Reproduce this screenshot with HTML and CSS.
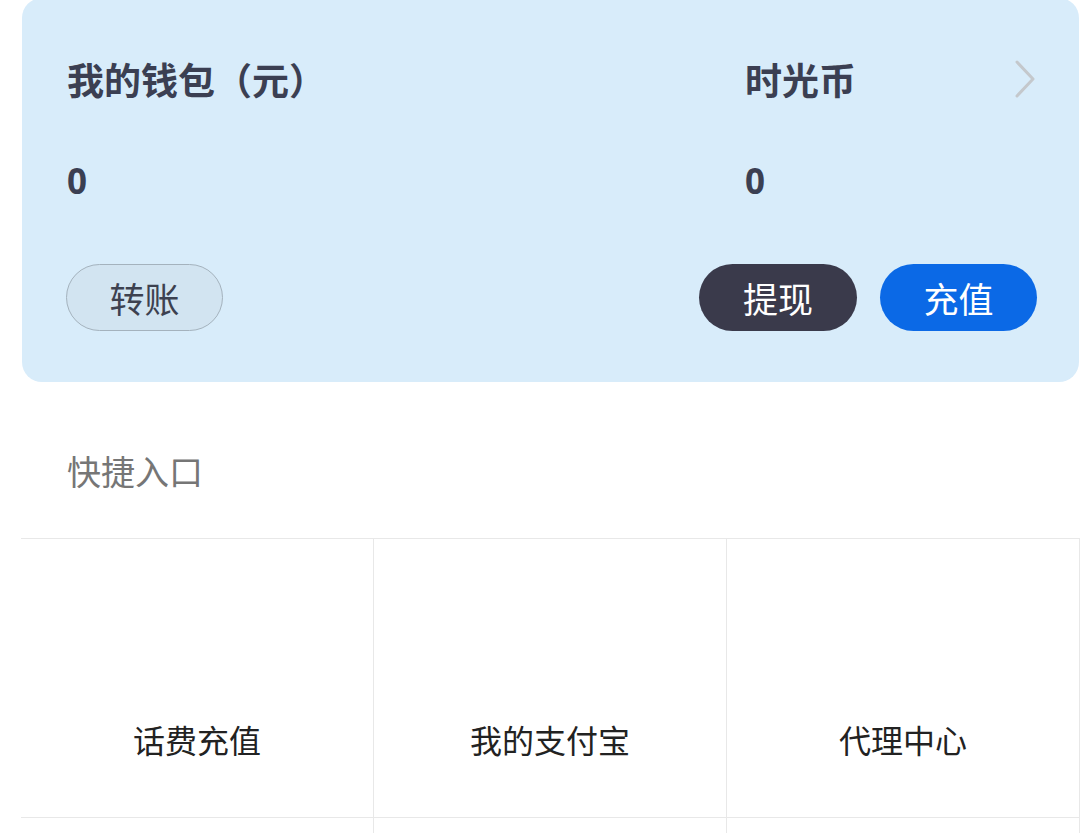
FILE: index.html
```html
<!DOCTYPE html>
<html lang="zh-CN">
<head>
    <meta charset="UTF-8">
    <meta name="viewport" content="width=device-width, initial-scale=1.0">
    <title>我的钱包</title>
    <link rel="stylesheet" href="styles.css">
</head>
<body>
    <main>
        <section class="wallet-card">
            <div class="wallet-row">
                <h2 class="wallet-title">我的钱包（元）</h2>
                <div class="coin-head">
                    <h2 class="wallet-title">时光币</h2>
                    <svg class="chevron" width="22" height="40" viewBox="0 0 22 40">
                        <path d="M3 3 L19 20 L3 37" fill="none" stroke="#c4c8cc" stroke-width="3" stroke-linecap="round" stroke-linejoin="round"/>
                    </svg>
                </div>
            </div>
            <div class="wallet-row values">
                <div class="amount">0</div>
                <div class="amount">0</div>
            </div>
            <div class="wallet-actions">
                <button class="pill pill-ghost">转账</button>
                <div class="action-group">
                    <button class="pill pill-dark">提现</button>
                    <button class="pill pill-blue">充值</button>
                </div>
            </div>
        </section>

        <h3 class="section-title">快捷入口</h3>

        <div class="shortcut-grid">
            <a class="shortcut" href="#">话费充值</a>
            <a class="shortcut" href="#">我的支付宝</a>
            <a class="shortcut" href="#">代理中心</a>
            <a class="shortcut" href="#">&nbsp;</a>
            <a class="shortcut" href="#">&nbsp;</a>
            <a class="shortcut" href="#">&nbsp;</a>
        </div>
    </main>
</body>
</html>
```

FILE: styles.css
```css
body {
    margin: 0;
    font-family: 'Noto Sans', 'Noto Sans CJK SC', sans-serif;
    background-color: #ffffff;
    color: #222222;
    overflow: hidden;
}

main {
    width: 1080px;
}

.wallet-card {
    margin: -2px 1px 0 22px;
    padding: 59px 42px 51px 45px;
    background-color: #d8ecfa;
    border-radius: 20px;
}

.wallet-row {
    display: grid;
    grid-template-columns: 1fr 292px;
    align-items: center;
}

.wallet-row.values {
    margin-top: 58px;
}

.wallet-title {
    margin: 0;
    font-family: 'Noto Sans CJK SC', sans-serif;
    font-size: 37px;
    line-height: 44px;
    font-weight: 700;
    color: #3b3f52;
}

.coin-head {
    display: flex;
    justify-content: space-between;
    align-items: center;
}

.chevron {
    display: block;
    margin-right: 1px;
}

.amount {
    font-size: 35px;
    line-height: 44px;
    font-weight: 700;
    color: #3b3f52;
}

.wallet-actions {
    display: flex;
    justify-content: space-between;
    align-items: center;
    margin-top: 61px;
    margin-left: -1px;
}

.action-group {
    display: flex;
    gap: 23px;
}

.pill {
    width: 157px;
    height: 67px;
    border-radius: 34px;
    font-family: 'Noto Sans CJK SC', sans-serif;
    font-size: 35px;
    border: none;
    padding: 0;
    cursor: pointer;
}

.pill-ghost {
    background-color: #d2e4f1;
    border: 1px solid #a4b2bd;
    color: #3d4150;
}

.pill-dark {
    width: 158px;
    background-color: #3a3a4b;
    color: #ffffff;
}

.pill-blue {
    background-color: #0b69e6;
    color: #ffffff;
}

.section-title {
    margin: 68px 0 0 67px;
    font-size: 34px;
    line-height: 44px;
    font-weight: 400;
    color: #767676;
}

.shortcut-grid {
    display: grid;
    grid-template-columns: repeat(3, 353px);
    grid-auto-rows: 279px;
    margin: 44px 0 0 21px;
    border-top: 1px solid #e8e8e8;
}

.shortcut {
    display: flex;
    align-items: flex-end;
    justify-content: center;
    padding-bottom: 54px;
    font-size: 32px;
    line-height: 44px;
    color: #222222;
    text-decoration: none;
    border-right: 1px solid #e8e8e8;
    border-bottom: 1px solid #e8e8e8;
}
```
